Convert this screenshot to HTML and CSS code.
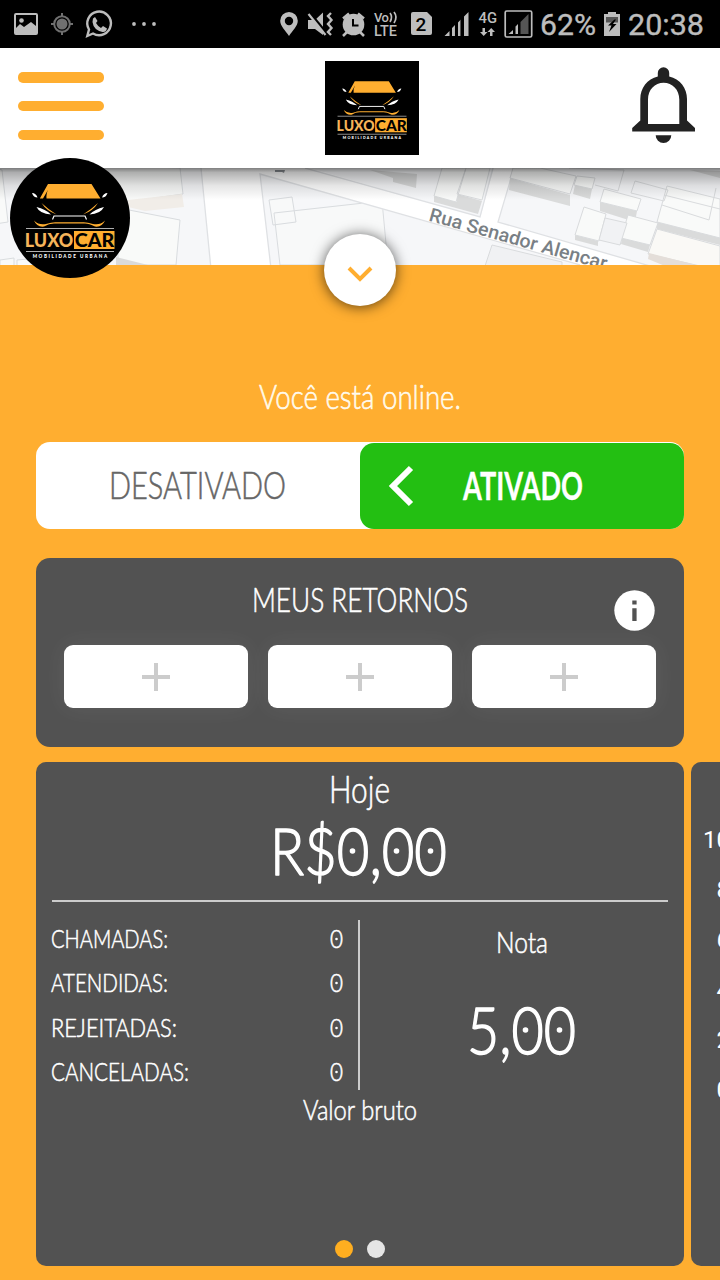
FILE: index.html
```html
<!DOCTYPE html>
<html lang="pt-BR">
<head>
<meta charset="utf-8">
<title>Luxocar</title>
<link rel="stylesheet" href="styles.css">
</head>
<body>
<svg width="0" height="0" class="defs">
  <symbol id="brand" viewBox="0 0 120 120">
    <path fill="#ffae30" d="M38 26H81.500L90.500 40.500H36.500Q36 35 38.500 31L33 40.500H29.800Z"/>
    <path fill="#fff" d="M22 35q4 0 5.500 4.500-4 0-5.500-4.500M97.500 35q-4 0-5.500 4.500 4 0 5.500-4.500M26.500 49q9 2 14.500 7.500-11-.5-14.500-7.500M94 49q-9 2-14.500 7.500 11-.5 14.500-7.500"/>
    <path fill="#ffae30" d="M31.500 45q7 6.500 15 11.500-10-3.500-15-11.500M88 45q-7 6.500-15 11.500 10-3.500 15-11.500"/>
    <path fill="none" stroke="#fff" stroke-width="1.200" d="M42.500 61.500l1.500-3.500H75l1.500 3.500"/>
    <path fill="#ffae30" d="M24 62.500q5 5 12 3.500 6-2 10-1.800H73q4-.2 10 1.800 7 1.500 12-3.500-3 7-10 6-6-3-10-3H44q-5 0-10 3-7 1-10-6"/>
    <path stroke="#ddd" stroke-width=".8" d="M16 70.500H104M16 93.500H104"/>
    <rect x="64" y="73" width="40.500" height="18" fill="#ffae30"/>
    <text class="brand-name" x="14.800" y="89.300" textLength="48.500" lengthAdjust="spacingAndGlyphs" fill="#f6b45a">LUXO</text>
    <text class="brand-name" x="64.800" y="89.300" textLength="39.500" lengthAdjust="spacingAndGlyphs" fill="#000">CAR</text>
    <text class="brand-sub" x="22.700" y="99.700" textLength="74.500" fill="#fff">MOBILIDADE URBANA</text>
  </symbol>
</svg>
<div class="screen">
  <div class="status">
    <svg width="180" height="48" fill="#bdbdbd">
      <path fill-rule="evenodd" d="M16 13H36a2 2 0 0 1 2 2V33a2 2 0 0 1-2 2H16a2 2 0 0 1-2-2V15a2 2 0 0 1 2-2M16 15V28l4-4 4 3 7-5 5 4V15Z"/>
      <circle cx="21.500" cy="20.500" r="2.300"/>
      <g stroke="#707070" fill="none" stroke-width="2"><circle cx="62" cy="24" r="7.800"/><path d="M62 13v4M62 31v4M51 24h4M69 24h4"/><circle cx="62" cy="24" r="4.500" fill="#707070"/></g>
      <path fill="none" stroke="#bdbdbd" stroke-width="2.400" d="M87.300 36 89 29.500A11.800 11.800 0 1 1 93 33.500Z"/>
      <path d="M93 18.500l2-1.500 2.500 4-1.500 2q2 3.500 5 5l2-2 4 2.500q-1 4-4.500 3.500-9-2-10-10z"/>
      <circle cx="134" cy="24" r="1.900"/><circle cx="144" cy="24" r="1.900"/><circle cx="154" cy="24" r="1.900"/>
    </svg>
    <svg width="440" height="48" viewBox="280 0 440 48" fill="#bdbdbd">
      <path fill-rule="evenodd" d="M289 12a8.800 8.800 0 0 1 8.800 8.800c0 5.500-5.500 10-8.800 15.200-3.300-5.200-8.800-9.700-8.800-15.200A8.800 8.800 0 0 1 289 12m0 4.800a4.200 4.200 0 1 0 0 8.400 4.200 4.200 0 0 0 0-8.400"/>
      <path d="M308 20h7l8-7.500V35L315 29H308Z"/>
      <path d="M309.500 13 326 33" stroke="#000" stroke-width="3.500"/><path d="M308.500 14 325.500 35" stroke="#bdbdbd" stroke-width="2.200"/>
      <path d="M331 13l-3 3 3.500 4-3.500 4 3.500 4-3.500 4 3 3" fill="none" stroke="#bdbdbd" stroke-width="2.400"/>
      <circle cx="353.500" cy="24.500" r="10.800"/><path d="M343 18.500l6-5M364 18.500l-6-5M347 32l-4 4M360 32l4 4" stroke="#bdbdbd" stroke-width="2.500"/>
      <path d="M353 19v6.500h5.500" fill="none" stroke="#000" stroke-width="2"/>
      <text class="sys" x="374" y="22" font-size="13" textLength="15">Vo</text>
      <path d="M390 13q3 4 0 9M394 12q4 5 0 11" fill="none" stroke="#bdbdbd" stroke-width="1.700"/>
      <text class="sys" x="374" y="35.500" font-size="14" textLength="23" lengthAdjust="spacingAndGlyphs">LTE</text>
      <path d="M413 12h14l5 5V33a2 2 0 0 1-2 2H413a2 2 0 0 1-2-2V14a2 2 0 0 1 2-2"/>
      <text class="sys" x="415.500" y="31" font-size="19" fill="#000" font-weight="700">2</text>
      <path d="M444.500 36 449.500 31V36ZM452 36V28l3-3V36ZM458 36V22.500l2.800-3V36ZM464 36V16.500l4.500-4.500V36Z"/>
      <path d="M455.700 12V36M461.300 12V36" stroke="#000" stroke-width="1.500"/>
      <text class="sys" x="478.500" y="23" font-size="14.500" textLength="18.500" lengthAdjust="spacingAndGlyphs">4G</text>
      <path d="M482.500 28h2.500v4h2.500l-3.800 4-3.700-4h2.500ZM490 36h2.500v-4h2.500l-3.800-4-3.700 4h2.500Z"/>
      <rect x="505.200" y="11" width="26.500" height="26" rx="1.500" fill="none" stroke="#bdbdbd" stroke-width="1.700"/>
      <path d="M508.500 34 513 30V34ZM515.500 34V26.500l2.500-2.500V34Z"/><path d="M520.500 34V22L528.500 14V34Z" fill="#555"/>
      <text class="sys clock" x="540" y="35" textLength="56" lengthAdjust="spacingAndGlyphs">62%</text>
      <path d="M604 14h4v-2h8v2h4V36H604Z"/><path d="M606 17h12v5.500H606Z" fill="#555"/><path d="M614.500 19.500 608 25.500h3.500L609 32l7.500-8H613l3-4.500Z" fill="#000"/>
      <text class="sys clock" x="628" y="35" textLength="76" lengthAdjust="spacingAndGlyphs">20:38</text>
    </svg>
  </div>

  <header class="header">
    <div class="menu"><i></i><i></i><i></i></div>
    <svg class="header-logo" width="94" height="94"><use href="#brand"/></svg>
    <svg class="bell" width="64" height="78" viewBox="632 66 64 78" fill="#222">
      <path fill-rule="evenodd" d="M657.800 76.500V73a5.700 5.700 0 0 1 11.400 0v3.500C680 79 687 88 687 99v21.500l8 7.500v3.500H632.200V128l8.100-7.500V99c0-11 7-20 17.500-22.500M648 124H679.300V99.500c0-10-7-16.800-15.700-16.800S648 89.500 648 99.500Z"/>
      <path d="M655.700 135.300H671.300a7.800 7.800 0 0 1-15.600 0"/>
    </svg>
  </header>

  <section class="map">
    <svg class="map-canvas" width="720" height="97" viewBox="0 168 720 97">
      <rect y="168" width="720" height="97" fill="#f6f7f9"/>
      <g stroke="#d9dcdf" stroke-width="1" fill="#f9faf9">
        <path d="M-5 168 2 170 8 222-5 224ZM0 260 14 258 14 266H0ZM17 260 60 256 60 266H17ZM100 165 180 168 183 194 128 202ZM118 208 129 210 180 220 176 265H118Z"/>
        <path d="M274 213 382 201 388 265H280ZM269 200 292 197 296 222 273 225Z" fill-opacity=".7"/>
      </g>
      <path fill="#f1ede8" d="M128 200 182 194 184 207 145 211 128 207Z"/>
      <path fill="#dadada" d="M116 257 148 265H116Z"/>
      <path d="M200.700 168H259L270.700 266H210.700Z" fill="#fff"/>
      <path d="M260 174 240 166H303L650 266H580Z" fill="#fff"/>
      <path d="M480 218 494 168H514L498 223Z" fill="#fff"/>
      <path d="M201 168 210.700 266M270.700 266 260 174 580 265M305 168 480 217 493 168M514 168 498 222 650 266" fill="none" stroke="#dfe1e4" stroke-width="1.300"/>
      <g fill="#dadbdb">
        <path d="M370 170 417 174 416 188 393 182V178ZM434 196 457 202V194L482 201 478 214 434 202ZM510 178 570 195 570 206 509 190ZM575 185 592 189 590 199 573 194ZM600 202 637 211 635 222 600 211ZM575 235 598 241 598 246 575 240ZM622 238 650 245 648 252 621 244ZM657 222 720 237V245L657 229ZM690 170 720 171V178Z"/>
      </g>
      <g fill="#f9faf9" stroke="#d9dbdd">
        <path d="M442 168 434 196 456 202 466 168ZM466 168 457 194 482 200 490 168ZM513 168 510 178 570 194 576 176 540 168ZM577 176 574 185 592 189 595 178ZM604 189 641 199 637 211 600 202ZM584 207 606 214 599 241 575 235ZM628 215 658 223 650 245 621 238ZM667 186 720 199V238L657 222Z"/>
        <path d="M569 168 624 170 618 191 595 185M635 181 668 190 664 201 631 193ZM662 205 709 220 716 188M664 195 720 209" fill="none"/>
        <path d="M605 218 627 223 620 245 599 240Z" fill="#f1f2f4"/>
        <path d="M657 229 720 246V266H700L648 254Z" fill="#faf9f6"/>
        <path d="M492 245 562 262V266H485Z" fill="#f0f1f3"/>
      </g>
      <path d="M649 253 700 266H665L648 259Z" fill="#e4ded9"/>
      <text class="street" transform="translate(428 220.500) rotate(15.600)" textLength="184" lengthAdjust="spacingAndGlyphs">Rua Senador Alencar</text>
      <path d="M275 170h10l-1 3-2-1h-7Z" fill="#8b9095"/>
    </svg>
    <svg class="avatar" width="120" height="120"><use href="#brand"/></svg>
    <div class="handle"><svg width="26" height="18"><path d="M2 2 13 13 24 2" fill="none" stroke="#ffae30" stroke-width="4"/></svg></div>
  </section>

  <main class="panel">
    <svg class="online" width="204" height="40"><text x="1" y="29" font-size="33" textLength="202" lengthAdjust="spacingAndGlyphs" fill="#fff9df" stroke="#fff9df">Você está online.</text></svg>

    <div class="toggle">
      <div class="off"><svg width="178" height="40"><text x="0" y="33" font-size="36.500" textLength="177" lengthAdjust="spacingAndGlyphs" fill="#666" stroke="#666">DESATIVADO</text></svg></div>
      <div class="on">
        <svg width="26" height="40"><path d="M24 2 6 20 24 38" fill="none" stroke="#fff" stroke-width="6"/></svg>
        <svg class="on-text" width="122" height="40"><text class="strong" x="1" y="33.500" font-size="37.500" textLength="120" lengthAdjust="spacingAndGlyphs">ATIVADO</text></svg>
      </div>
    </div>

    <section class="card returns">
      <div class="returns-head">
        <svg class="returns-title" width="220" height="36"><text x="2" y="30" font-size="33.500" textLength="216" lengthAdjust="spacingAndGlyphs">MEUS RETORNOS</text></svg>
        <svg class="info" width="41" height="41"><circle cx="20.500" cy="20.500" r="20.200" fill="#fff"/><path d="M18.300 10.500h4.300v4H18.300ZM18.300 18.300h4.300V31H18.300Z" fill="#525252"/></svg>
      </div>
      <div class="slots"><div class="slot"></div><div class="slot"></div><div class="slot"></div></div>
    </section>

    <div class="carousel">
      <section class="card today">
        <svg class="center" width="64" height="44"><text x="1" y="31" font-size="36.500" textLength="61" lengthAdjust="spacingAndGlyphs">Hoje</text></svg>
        <svg class="center amount" width="182" height="64"><text class="big" x="1" y="56.500" font-size="65.500" textLength="177" lengthAdjust="spacingAndGlyphs">R$0,00</text><circle cx="83.500" cy="33" r="2.800"/><circle cx="127.500" cy="33" r="2.800"/><circle cx="161.500" cy="33" r="2.800"/></svg>
        <div class="rule"></div>
        <div class="stats">
          <div class="counts">
            <div class="row"><svg width="140" height="28"><text x="0" y="23" font-size="25" textLength="117" lengthAdjust="spacingAndGlyphs">CHAMADAS:</text></svg><svg width="14" height="28"><text x="1" y="23" font-size="25" textLength="13" lengthAdjust="spacingAndGlyphs">0</text><circle cx="7.500" cy="14" r="1.300"/></svg></div>
            <div class="row"><svg width="140" height="28"><text x="0" y="23" font-size="25" textLength="117" lengthAdjust="spacingAndGlyphs">ATENDIDAS:</text></svg><svg width="14" height="28"><text x="1" y="23" font-size="25" textLength="13" lengthAdjust="spacingAndGlyphs">0</text><circle cx="7.500" cy="14" r="1.300"/></svg></div>
            <div class="row"><svg width="140" height="28"><text x="0" y="23" font-size="25" textLength="126" lengthAdjust="spacingAndGlyphs">REJEITADAS:</text></svg><svg width="14" height="28"><text x="1" y="23" font-size="25" textLength="13" lengthAdjust="spacingAndGlyphs">0</text><circle cx="7.500" cy="14" r="1.300"/></svg></div>
            <div class="row"><svg width="140" height="28"><text x="0" y="23" font-size="25" textLength="138" lengthAdjust="spacingAndGlyphs">CANCELADAS:</text></svg><svg width="14" height="28"><text x="1" y="23" font-size="25" textLength="13" lengthAdjust="spacingAndGlyphs">0</text><circle cx="7.500" cy="14" r="1.300"/></svg></div>
          </div>
          <div class="grade">
            <svg width="56" height="36"><text x="2" y="27" font-size="28.500" textLength="52" lengthAdjust="spacingAndGlyphs">Nota</text></svg>
            <svg class="score" width="114" height="64"><text class="big" x="2" y="56.500" font-size="65" textLength="109" lengthAdjust="spacingAndGlyphs">5,00</text><circle cx="60.500" cy="33" r="2.800"/><circle cx="94.500" cy="33" r="2.800"/></svg>
          </div>
        </div>
        <svg class="center" width="116" height="40"><text x="1" y="30" font-size="28" textLength="114" lengthAdjust="spacingAndGlyphs">Valor bruto</text></svg>
        <div class="dots"><i class="active"></i><i></i></div>
      </section>
      <section class="card chart">
        <div class="axis"><span>10</span><span>8</span><span>6</span><span>4</span><span>2</span><span>0</span></div>
      </section>
    </div>
  </main>
</div>
</body>
</html>
```
FILE: styles.css
```css
* { box-sizing: border-box; }
body { margin: 0; font-family: Lato, "Liberation Sans", sans-serif; background: #ffae30; }
svg { display: block; flex: none; overflow: visible; }
.defs { position: absolute; }
.screen { width: 720px; height: 1280px; overflow: hidden; background: #ffae30; display: flex; flex-direction: column; }
.brand-name { font: 900 18.5px Lato, sans-serif; }
.brand-sub { font: 900 4.6px Lato, sans-serif; }

.status { height: 48px; background: #000; display: flex; justify-content: space-between; flex: none; }
.sys { font-family: Roboto, sans-serif; font-weight: 500; }
.clock { font-size: 30px; font-weight: 400; stroke: #bdbdbd; stroke-width: .4px; }

.header { position: relative; z-index: 1; height: 120px; flex: none; background: #fff; display: grid; grid-template-columns: 325px 94px 1fr; align-items: start; padding-top: 13px; }
.menu { display: flex; flex-direction: column; gap: 19px; padding: 11px 0 0 18px; }
.menu i { width: 86px; height: 10px; border-radius: 5px; background: #ffae30; }
.menu i:first-child { height: 11px; margin-bottom: -1px; }
.header-logo { background: #000; }
.bell { justify-self: end; margin: 5px 24px 0 0; }

.map { position: relative; z-index: 2; height: 97px; flex: none; }
.map-canvas { overflow: hidden; }
.map::before { content: ""; position: absolute; inset: 0 0 auto; height: 32px; z-index: 1; background: linear-gradient(rgba(0,0,0,.5), rgba(0,0,0,.3) 14%, rgba(0,0,0,.1) 55%, transparent); }
.street { font-family: Roboto, sans-serif; font-weight: 500; font-size: 19px; fill: #798085; }
.avatar { position: absolute; z-index: 2; left: 10px; top: -10px; border-radius: 50%; background: #000; }
.handle { position: absolute; z-index: 2; left: 324px; top: 66px; width: 72px; height: 72px; border-radius: 50%; background: #fff; display: flex; align-items: center; justify-content: center; padding-top: 10px; box-shadow: 0 1px 14px rgba(0,0,0,.65); }

.panel { padding: 115px 36px 0; display: flex; flex-direction: column; fill: #fff; }
.panel text { font-weight: 300; stroke: #fff; stroke-width: .55px; stroke-linejoin: round; }
.panel text[fill="#666"] { stroke: #666; }
.panel .strong { font-weight: 700; stroke-width: .3px; }
.panel .big { stroke-width: 1.5px; }
.online { align-self: center; margin-bottom: 22px; }
.toggle { height: 87px; flex: none; border-radius: 14px; background: #fff; display: grid; grid-template-columns: 1fr 1fr; padding-top: 1px; }
.off { display: flex; align-items: center; justify-content: center; }
.on { background: #23bf12; border-radius: 14px; display: flex; align-items: center; padding-left: 27px; }
.on-text { margin-left: 49px; }

.card { background: #525252; color: #fff; flex: none; }
.returns { margin-top: 29px; height: 189px; border-radius: 14px; padding: 24px 28px 0; }
.returns-head { display: grid; grid-template-columns: 41px 1fr 41px; height: 63px; }
.returns-title { grid-column: 2; justify-self: center; }
.info { margin: 8px 0 0 -1px; }
.slots { display: grid; grid-template-columns: repeat(3, 1fr); gap: 20px; }
.slot { height: 63px; border-radius: 9px; box-shadow: 0 0 24px rgba(255,255,255,.07); background: linear-gradient(#ccc, #ccc) center / 28px 4px no-repeat, linear-gradient(#ccc, #ccc) center / 4px 28px no-repeat, #fff; }

.carousel { display: flex; gap: 7px; margin-top: 15px; }
.today { width: 648px; height: 504px; border-radius: 10px; display: flex; flex-direction: column; padding: 10px 16px 8px 15px; }
.center { align-self: center; }
.amount { margin-top: 2px; }
.rule { height: 2px; flex: none; margin: 18px 0 18px 1px; background: #ccc; }
.stats { display: grid; grid-template-columns: 309px 1fr; height: 170px; flex: none; }
.counts { border-right: 2px solid #ccc; padding: 5px 15px 0 0; display: flex; flex-direction: column; gap: 16.4px; }
.row { display: flex; justify-content: space-between; }
.grade { display: flex; flex-direction: column; align-items: center; padding: 6px 0 0 16px; }
.score { margin-top: 35px; }
.dots { margin-top: auto; display: flex; justify-content: center; gap: 14px; }
.dots i { width: 18px; height: 18px; border-radius: 50%; background: #e5e5e5; }
.dots .active { background: #ffae20; }
.chart { width: 648px; height: 504px; border-radius: 10px; padding: 64px 0 0 12px; }
.axis { width: 27px; display: flex; flex-direction: column; align-items: flex-end; font: 24px/28px Roboto, sans-serif; gap: 22px; }
```
